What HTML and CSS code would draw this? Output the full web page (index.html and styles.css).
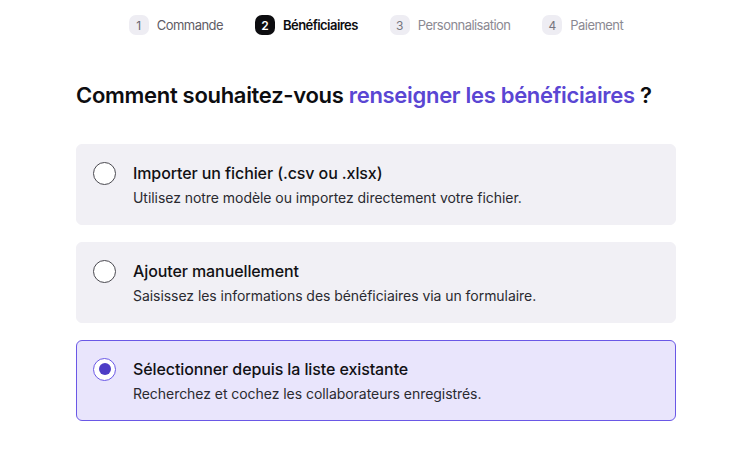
FILE: index.html
```html
<!DOCTYPE html>
<html lang="fr">
<head>
<meta charset="utf-8">
<link rel="stylesheet" href="styles.css">
</head>
<body>
<div class="page">
  <nav class="steps">
    <div class="step"><span class="badge">1</span><span class="label">Commande</span></div>
    <div class="step active"><span class="badge">2</span><span class="label">Bénéficiaires</span></div>
    <div class="step future"><span class="badge">3</span><span class="label">Personnalisation</span></div>
    <div class="step future"><span class="badge">4</span><span class="label">Paiement</span></div>
  </nav>
  <h1 class="title">Comment souhaitez-vous <span class="accent">renseigner les bénéficiaires</span> ?</h1>
  <div class="options">
    <label class="option">
      <span class="radio"></span>
      <span class="text">
        <span class="opt-title">Importer un fichier (.csv ou .xlsx)</span>
        <span class="opt-desc">Utilisez notre modèle ou importez directement votre fichier.</span>
      </span>
    </label>
    <label class="option">
      <span class="radio"></span>
      <span class="text">
        <span class="opt-title">Ajouter manuellement</span>
        <span class="opt-desc">Saisissez les informations des bénéficiaires via un formulaire.</span>
      </span>
    </label>
    <label class="option selected">
      <span class="radio"></span>
      <span class="text">
        <span class="opt-title">Sélectionner depuis la liste existante</span>
        <span class="opt-desc">Recherchez et cochez les collaborateurs enregistrés.</span>
      </span>
    </label>
  </div>
</div>
</body>
</html>
```
FILE: styles.css
```css
* { box-sizing: border-box; }
html, body { margin: 0; padding: 0; background: #ffffff; }
body {
  font-family: Inter, "Liberation Sans", sans-serif;
  color: #111114;
}
.page {
  width: 600px;
  margin-left: 76px;
  padding-top: 15px;
}
.steps {
  display: flex;
  justify-content: center;
  gap: 32px;
  height: 20px;
}
.step {
  display: flex;
  align-items: center;
  gap: 8px;
  font-size: 13px;
  letter-spacing: -0.55px;
  color: #5f5d66;
}
.badge {
  width: 20px;
  height: 20px;
  border-radius: 7px;
  background: #eeedf3;
  display: flex;
  align-items: center;
  justify-content: center;
  font-size: 12px;
  letter-spacing: 0;
  color: #66646d;
}
.step.active { color: #0d0d10; font-weight: 600; }
.step.active .badge { background: #0d0d10; color: #fff; font-weight: 600; }
.step.future { color: #8b8992; }
.step.future .badge { color: #77757e; }
.title {
  margin: 46px 0 0 0;
  font-size: 22px;
  font-weight: 600;
  letter-spacing: -0.3px;
  line-height: 28px;
  color: #0d0d10;
}
.accent { color: #5a46d3; }
.options {
  margin-top: 35px;
  display: flex;
  flex-direction: column;
  gap: 17px;
}
.option {
  display: flex;
  align-items: flex-start;
  gap: 17px;
  height: 81px;
  padding: 18px 16px 0 16px;
  background: #f1f0f5;
  border: 1px solid #f1f0f5;
  border-radius: 6px;
}
.option.selected {
  background: #e9e5fc;
  border-color: #6a58e6;
}
.radio {
  flex: none;
  width: 23px;
  height: 23px;
  border-radius: 50%;
  border: 1px solid #4a4950;
  background: #fff;
  margin-top: -1.5px;
  display: flex;
  align-items: center;
  justify-content: center;
}
.option.selected .radio {
  border: 1.5px solid #6a58e6;
}
.option.selected .radio::after {
  content: "";
  width: 12px;
  height: 12px;
  border-radius: 50%;
  background: #4d3dc6;
}
.text {
  display: flex;
  flex-direction: column;
  gap: 6px;
}
.opt-title {
  font-size: 16px;
  font-weight: 500;
  line-height: 20px;
  color: #111114;
  letter-spacing: -0.1px;
}
.opt-desc {
  font-size: 14px;
  line-height: 18px;
  letter-spacing: -0.05px;
  color: #2a2a30;
}
```
